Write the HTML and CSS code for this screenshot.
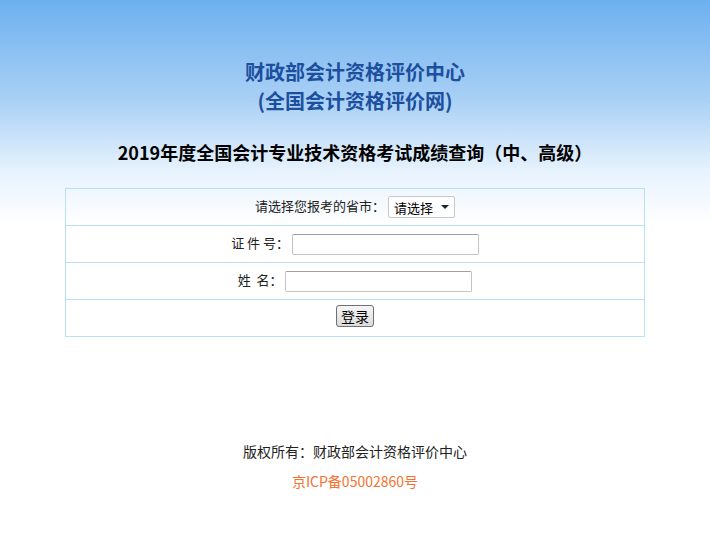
FILE: index.html
```html
<!DOCTYPE html>
<html>
<head>
    <meta charset="utf-8">
    <title>2019年度全国会计专业技术资格考试成绩查询</title>
    <link rel="stylesheet" href="styles.css">
</head>
<body>
<div class="top">
    <h1 class="site-title">财政部会计资格评价中心<br>(全国会计资格评价网)</h1>
    <h2 class="query-title">2019年度全国会计专业技术资格考试成绩查询（中、高级）</h2>
</div>
<form class="query-form">
    <table class="query-table">
        <tr>
            <td>
                <label for="province">请选择您报考的省市：</label>
                <span class="select-wrap">
                    <select id="province" name="province">
                        <option>请选择</option>
                    </select>
                </span>
            </td>
        </tr>
        <tr>
            <td>
                <label for="idno">证 件 号：</label>
                <input type="text" id="idno" name="idno" class="text-input">
            </td>
        </tr>
        <tr>
            <td>
                <label for="name">姓&nbsp;&nbsp;名：</label>
                <input type="text" id="name" name="name" class="text-input">
            </td>
        </tr>
        <tr>
            <td>
                <button type="submit" class="login-btn">登录</button>
            </td>
        </tr>
    </table>
</form>
<!-- footer -->
<div class="footer">
    <p>版权所有：财政部会计资格评价中心</p>
    <p class="icp">京ICP备05002860号</p>
</div>
</body>
</html>
```

FILE: styles.css
```css
body {
    margin: 0;
    padding: 0;
    font-family: "Noto Sans CJK SC", "Microsoft YaHei", sans-serif;
    color: #222;
    background: #fff linear-gradient(to bottom, #6db0ef 0px, #a9d0f5 100px, #e6f2fd 170px, #ffffff 225px) no-repeat;
    background-size: 100% 230px;
}
.top {
    text-align: center;
    padding-top: 57px;
}
.site-title {
    margin: 0;
    font-size: 20px;
    line-height: 29px;
    font-weight: bold;
    color: #1d4f9f;
}
.query-title {
    margin: 24px 0 0;
    font-size: 18px;
    line-height: 26px;
    font-weight: bold;
    color: #000;
}
.query-form {
    margin-top: 23px;
}
.query-table {
    width: 580px;
    margin: 0 auto;
    border-collapse: collapse;
}
.query-table td {
    border: 1px solid #b8e0f2;
    height: 36px;
    padding: 0;
    text-align: center;
    font-size: 13px;
    line-height: 20px;
}
.query-table label {
    color: #222;
}
.select-wrap {
    position: relative;
    display: inline-block;
    vertical-align: middle;
}
.select-wrap select {
    appearance: none;
    -webkit-appearance: none;
    width: 67px;
    height: 22px;
    padding: 0 0 0 5px;
    border: 1px solid #c9c9c9;
    border-radius: 2px;
    background: #fff;
    font-family: inherit;
    font-size: 13px;
    color: #000;
}
.select-wrap::after {
    content: "";
    position: absolute;
    right: 6px;
    top: 9px;
    border-left: 4px solid transparent;
    border-right: 4px solid transparent;
    border-top: 4px solid #222;
    pointer-events: none;
}
.text-input {
    width: 183px;
    height: 17px;
    padding: 1px;
    border: 1px solid #c4c4c4;
    border-top-color: #a0a0a0;
    border-radius: 2px;
    vertical-align: middle;
}
.login-btn {
    height: 22px;
    margin-bottom: 4px;
    padding: 0 4px;
    font-family: inherit;
    font-size: 14px;
    line-height: 18px;
    color: #000;
    background: linear-gradient(#f6f6f6, #dcdcdc);
    border: 1px solid #707070;
    border-radius: 3px;
    vertical-align: middle;
}
.footer {
    margin-top: 99px;
    text-align: center;
    font-size: 14px;
}
.footer p {
    margin: 0;
    line-height: 30px;
}
.footer .icp {
    color: #f4712f;
}
```
